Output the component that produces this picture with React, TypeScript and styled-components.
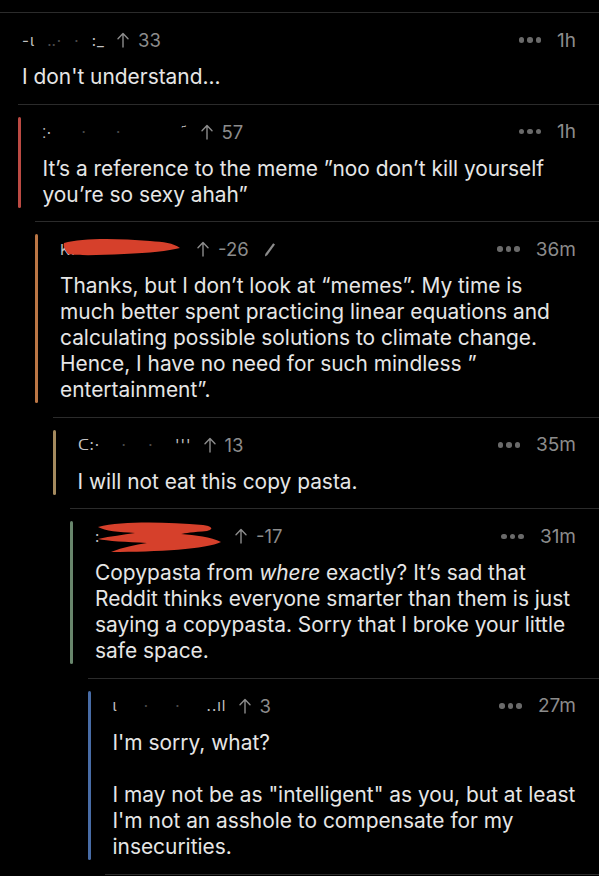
import React from 'react';
import styled, { createGlobalStyle } from 'styled-components';

const GlobalStyle = createGlobalStyle`
  html, body { margin: 0; padding: 0; background: #000; }
  body { font-family: Inter, "Noto Sans", sans-serif; -webkit-font-smoothing: antialiased; }
`;

const Thread = styled.div`
  width: 599px;
  height: 876px;
  overflow: hidden;
  background: #000;
  padding-top: 12px;
  box-sizing: border-box;
`;

const Row = styled.div<{ $level: number }>`
  margin-left: ${(p) => p.$level * 17.5}px;
  border-top: 1px solid #2b2b2b;
  padding: 12px 23px 13.6px ${(p) => (p.$level === 0 ? 22 : 0)}px;
  display: flex;
`;

const EndRule = styled.div<{ $level: number }>`
  margin-left: ${(p) => p.$level * 17.5}px;
  border-top: 1px solid #2b2b2b;
`;

const Bar = styled.div<{ $color: string }>`
  width: 3px;
  flex-shrink: 0;
  border-radius: 2px;
  background: ${(p) => p.$color};
  margin-right: 22px;
`;

const Content = styled.div`
  flex: 1;
  min-width: 0;
`;

const Meta = styled.div`
  height: 30px;
  display: flex;
  align-items: center;
  justify-content: space-between;
  font-size: 18.5px;
  color: #8c8c8c;
`;

const MetaLeft = styled.div`
  display: flex;
  align-items: center;
`;

const Handle = styled.div<{ $width: number }>`
  position: relative;
  width: ${(p) => p.$width}px;
  height: 30px;
  margin-right: 12px;
  display: flex;
  align-items: center;
  justify-content: space-between;
  font-size: 15px;
  color: #d8d8d8;
`;

const Frag = styled.span<{ $faint?: boolean }>`
  opacity: ${(p) => (p.$faint ? 0.35 : 0.9)};
  letter-spacing: 1px;
`;

const Scribble = styled.svg`
  position: absolute;
  left: 0;
  top: 0;
`;

const Score = styled.span`
  margin-left: 9px;
`;

const Edited = styled.svg`
  margin-left: 15px;
`;

const MetaRight = styled.div`
  display: flex;
  align-items: center;
  gap: 16px;
`;

const Dots = styled.div`
  display: flex;
  gap: 3px;
`;

const Dot = styled.span`
  width: 5.5px;
  height: 5.5px;
  border-radius: 50%;
  background: #6a6a6a;
`;

const Time = styled.span`
  font-size: 19px;
  color: #8c8c8c;
`;

const Body = styled.div`
  margin-top: 9px;
  font-size: 20.9px;
  line-height: 26px;
  color: #e6e6e6;
  white-space: nowrap;
`;

const UpArrow = () => (
  <svg width="12" height="16" viewBox="0 0 12 16" fill="none" stroke="#8c8c8c" strokeWidth="1.4" strokeLinecap="round" strokeLinejoin="round">
    <path d="M6 15V1.8M1 6.8L6 1.6L11 6.8" />
  </svg>
);

const Pencil = () => (
  <Edited width="12" height="15" viewBox="0 0 12 15">
    <path d="M9.2 1.2L11 2.4L3.2 13.2L1 14.4L1.3 11.9Z" fill="#8c8c8c" />
  </Edited>
);

type CommentProps = {
  level: number;
  handle: React.ReactNode;
  handleWidth: number;
  score: string;
  time: string;
  edited?: boolean;
  children: React.ReactNode;
};

const barColors = ['', '#bb4a43', '#bb7645', '#a48a5e', '#68866c', '#486ca6'];

const Comment = ({ level, handle, handleWidth, score, time, edited, children }: CommentProps) => (
  <Row $level={level}>
    {level > 0 && <Bar $color={barColors[level]} />}
    <Content>
      <Meta>
        <MetaLeft>
          <Handle $width={handleWidth}>{handle}</Handle>
          <UpArrow />
          <Score>{score}</Score>
          {edited && <Pencil />}
        </MetaLeft>
        <MetaRight>
          <Dots>
            <Dot />
            <Dot />
            <Dot />
          </Dots>
          <Time>{time}</Time>
        </MetaRight>
      </Meta>
      <Body>{children}</Body>
    </Content>
  </Row>
);

export default function App() {
  return (
    <>
      <GlobalStyle />
      <Thread>
        <Comment
          level={0}
          handleWidth={83}
          score="33"
          time="1h"
          handle={
            <>
              <Frag>-ι</Frag>
              <Frag $faint>‥·</Frag>
              <Frag $faint>·</Frag>
              <Frag>:_</Frag>
            </>
          }
        >
          I don't understand...
        </Comment>

        <Comment
          level={1}
          handleWidth={146}
          score="57"
          time="1h"
          handle={
            <>
              <Frag>⁚·</Frag>
              <Frag $faint>·</Frag>
              <Frag $faint>·</Frag>
              <Frag $faint> </Frag>
              <Frag>˜</Frag>
            </>
          }
        >
          It’s a reference to the meme ”noo don’t kill yourself
          <br />
          you’re so sexy ahah”
        </Comment>

        <Comment
          level={2}
          handleWidth={125}
          score="-26"
          time="36m"
          edited
          handle={
            <>
              <Frag>Kı</Frag>
              <Scribble width="125" height="30" viewBox="0 0 125 30">
                <path
                  d="M4 9 C 22 4, 55 4, 90 7 C 104 8, 113 9, 120 14 C 108 17, 90 19, 64 20 C 40 21, 22 22, 8 20 C 5 16, 3 12, 4 9 Z"
                  fill="#d6402b"
                />
              </Scribble>
            </>
          }
        >
          Thanks, but I don’t look at “memes”. My time is
          <br />
          much better spent practicing linear equations and
          <br />
          calculating possible solutions to climate change.
          <br />
          Hence, I have no need for such mindless ”
          <br />
          entertainment”.
        </Comment>

        <Comment
          level={3}
          handleWidth={114}
          score="13"
          time="35m"
          handle={
            <>
              <Frag>ᑕ:·</Frag>
              <Frag $faint>·</Frag>
              <Frag $faint>·</Frag>
              <Frag>'''</Frag>
            </>
          }
        >
          I will not eat this copy pasta.
        </Comment>

        <Comment
          level={4}
          handleWidth={128}
          score="-17"
          time="31m"
          handle={
            <>
              <Frag>:</Frag>
              <Scribble width="128" height="32" viewBox="0 0 128 32">
                <path
                  d="M3 6 C 28 0, 70 1, 108 4 C 116 5, 120 8, 112 10 C 98 11, 90 12, 86 13 C 100 14, 116 16, 126 21 C 112 28, 62 31, 16 31 C 28 26, 40 24, 52 22 C 32 21, 12 20, 3 18 C 16 15, 28 14, 40 12 C 24 11, 10 10, 3 6 Z"
                  fill="#d6402b"
                />
              </Scribble>
            </>
          }
        >
          Copypasta from <i>where</i> exactly? It’s sad that
          <br />
          Reddit thinks everyone smarter than them is just
          <br />
          saying a copypasta. Sorry that I broke your little
          <br />
          safe space.
        </Comment>

        <Comment
          level={5}
          handleWidth={114}
          score="3"
          time="27m"
          handle={
            <>
              <Frag>ι</Frag>
              <Frag $faint>·</Frag>
              <Frag $faint>·</Frag>
              <Frag>..ıl</Frag>
            </>
          }
        >
          I'm sorry, what?
          <br />
          <br />
          I may not be as "intelligent" as you, but at least
          <br />
          I'm not an asshole to compensate for my
          <br />
          insecurities.
        </Comment>
        <EndRule $level={6} />
      </Thread>
    </>
  );
}
